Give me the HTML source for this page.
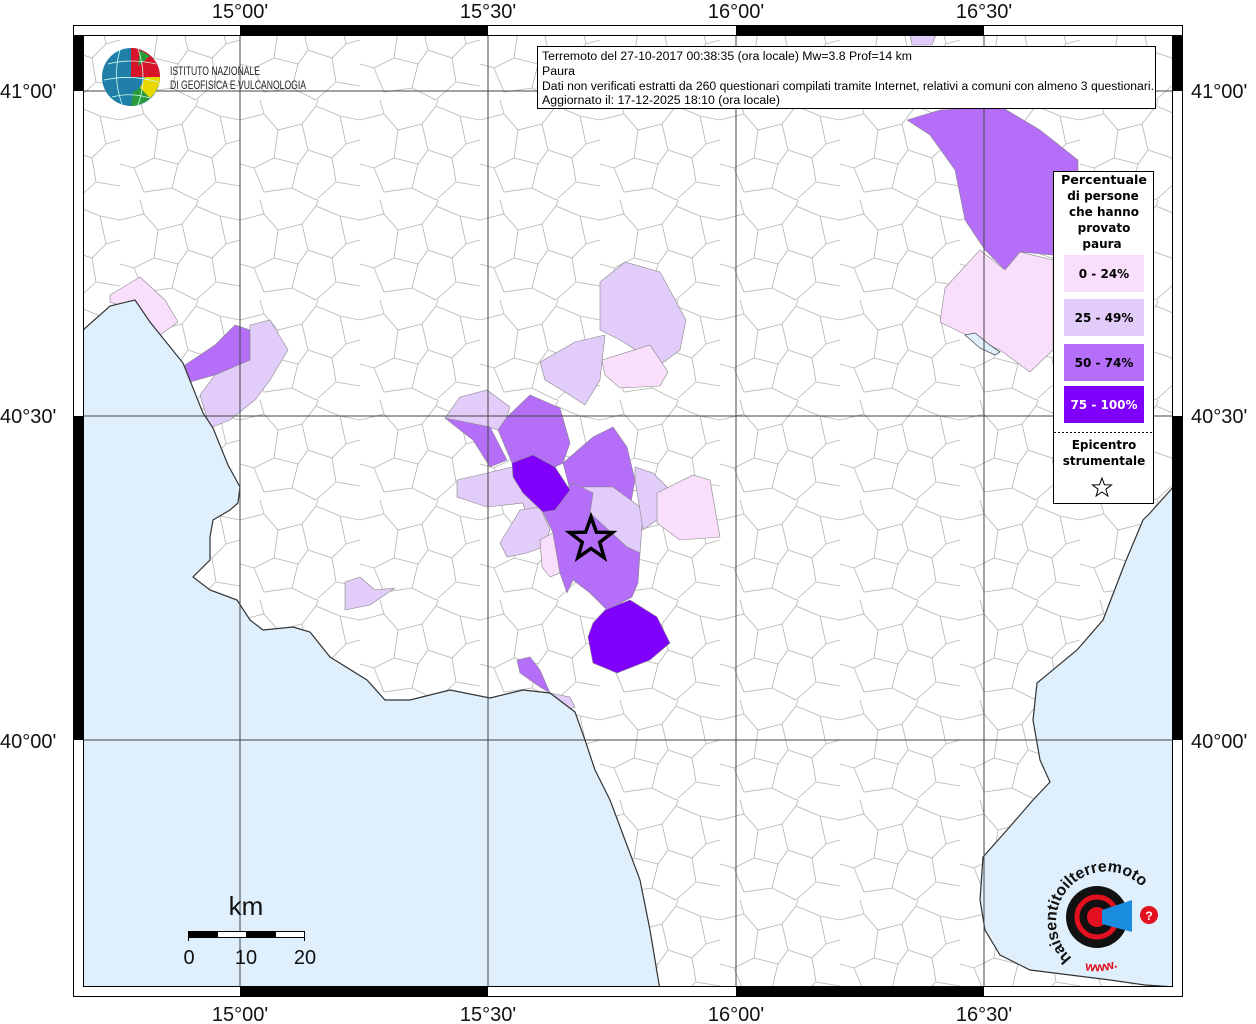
<!DOCTYPE html>
<html><head><meta charset="utf-8"><style>
html,body{margin:0;padding:0;background:#fff;}
svg{display:block;font-family:"Liberation Sans",sans-serif;}
</style></head><body>
<svg width="1256" height="1024" viewBox="0 0 1256 1024" xmlns="http://www.w3.org/2000/svg">
<defs>
<pattern id="bd" width="120" height="100" patternUnits="userSpaceOnUse">
<path d="M0 20 L24 14 L38 30 L62 24 L76 6 L100 16 L120 20 M38 30 L34 58 L14 68 L0 64 M34 58 L58 64 L68 50 L62 24 M68 50 L92 58 L106 44 L100 16 M92 58 L96 82 L120 86 M58 64 L52 88 L24 92 L14 68 M52 88 L76 100 M96 82 L76 100 M24 14 L20 0 M76 6 L78 0 M106 44 L120 40" fill="none" stroke="#b4b4b4" stroke-width="0.8"/>
</pattern>
<clipPath id="mc"><rect x="83" y="35" width="1090" height="952"/></clipPath>
</defs>
<rect x="83" y="35" width="1090" height="952" fill="#fff"/>
<g clip-path="url(#mc)">
<rect x="83" y="35" width="1090" height="952" fill="url(#bd)"/>
<g stroke="#888" stroke-width="0.6">
<path fill="#f9dffb" d="M110 295 L140 277 L165 300 L178 322 L160 335 L140 312 L110 302Z"/>
<path fill="#b56ef8" d="M185 365 L215 345 L235 325 L250 330 L250 360 L215 375 L190 382Z"/>
<path fill="#e2ccfa" d="M215 375 L250 360 L250 325 L270 320 L288 350 L270 380 L255 400 L230 420 L210 428 L200 395Z"/>
<path fill="#e2ccfa" d="M345 582 L360 577 L375 590 L395 588 L370 605 L345 610Z"/>
<path fill="#e2ccfa" d="M600 282 L625 262 L660 272 L686 320 L680 350 L660 365 L620 340 L600 330Z"/>
<path fill="#e2ccfa" d="M540 362 L575 342 L605 335 L600 380 L585 405 L565 392 L545 380Z"/>
<path fill="#f9dffb" d="M602 360 L650 345 L668 372 L660 386 L620 388 L605 375Z"/>
<path fill="#b56ef8" d="M907 120 L940 110 L1000 106 L1040 130 L1078 160 L1078 175 L1053 175 L1053 255 L1020 252 L1005 270 L985 250 L965 220 L955 170 L930 135Z"/>
<path fill="#f9dffb" d="M945 288 L980 250 L1005 270 L1020 252 L1053 260 L1053 350 L1030 372 L1000 350 L960 332 L940 322Z"/>
<path fill="#e2ccfa" d="M910 35 L936 35 L932 45 L912 45Z"/>
<path fill="#e2ccfa" d="M460 397 L487 390 L510 407 L507 417 L498 430 L488 427 L445 418Z"/>
<path fill="#b56ef8" d="M445 418 L490 427 L507 460 L490 467 L473 440 L460 430Z"/>
<path fill="#b56ef8" d="M507 417 L530 395 L560 408 L570 443 L563 463 L555 467 L533 455 L512 463 L498 430Z"/>
<path fill="#b56ef8" d="M563 463 L593 437 L613 427 L627 447 L635 480 L630 508 L613 487 L583 487 L570 490Z"/>
<path fill="#e2ccfa" d="M457 480 L487 473 L512 467 L523 493 L540 507 L527 520 L523 503 L487 507 L457 497Z"/>
<path fill="#e2ccfa" d="M500 543 L520 510 L540 507 L550 530 L543 547 L527 553 L507 557Z"/>
<path fill="#e2ccfa" d="M583 487 L613 487 L640 507 L643 513 L640 553 L627 547 L593 533 L590 513Z"/>
<path fill="#e2ccfa" d="M635 467 L653 473 L670 490 L657 520 L643 530 L640 510 L635 480Z"/>
<path fill="#f9dffb" d="M657 493 L693 475 L710 480 L720 537 L680 540 L657 523Z"/>
<path fill="#f9dffb" d="M540 540 L553 533 L560 573 L550 577 L542 567Z"/>
<path fill="#b56ef8" d="M543 512 L573 483 L593 493 L590 513 L627 547 L640 553 L638 583 L632 597 L607 610 L590 593 L573 580 L567 593 L560 573 L553 533Z"/>
<path fill="#7f00fb" d="M512 463 L533 455 L555 467 L570 490 L555 510 L543 512 L523 493 L513 477Z"/>
<path fill="#7f00fb" d="M593 623 L605 610 L630 600 L657 617 L670 643 L650 660 L617 673 L593 663 L588 637Z"/>
<path fill="#b56ef8" d="M517 660 L530 657 L540 670 L550 693 L540 687 L520 673Z"/>
<path fill="#e2ccfa" d="M550 693 L570 697 L575 707 L560 713Z"/>
</g>
<path fill="#dff0fc" stroke="#333" stroke-width="1.2" d="M83 330 L110 306 L135 300 L150 322 L183 363 L203 413 L213 428 L228 465 L240 487 L238 503 L230 510 L213 520 L210 537 L210 560 L193 577 L210 590 L237 600 L250 620 L263 630 L293 627 L310 632 L330 657 L367 680 L385 700 L410 700 L450 690 L490 698 L523 690 L550 693 L575 712 L585 740 L595 770 L610 800 L625 840 L640 880 L650 930 L660 990 L83 990Z"/>
<path fill="#dff0fc" stroke="#333" stroke-width="1.2" d="M1175 485 L1150 513 L1143 520 L1125 563 L1103 620 L1077 650 L1037 683 L1033 720 L1040 760 L1050 782 L1033 800 L1007 830 L983 857 L980 900 L985 930 L1000 955 L1030 970 L1070 975 L1110 980 L1145 985 L1175 987Z"/>
<path fill="#dff0fc" stroke="#555" stroke-width="0.8" d="M965 335 L975 333 L990 345 L1000 352 L995 355 L980 348Z"/>
</g>
<g stroke="#444" stroke-width="1">
<line x1="240" y1="35" x2="240" y2="987"/><line x1="488" y1="35" x2="488" y2="987"/>
<line x1="736" y1="35" x2="736" y2="987"/><line x1="984" y1="35" x2="984" y2="987"/>
<line x1="83" y1="91" x2="1173" y2="91"/><line x1="83" y1="416" x2="1173" y2="416"/>
<line x1="83" y1="740" x2="1173" y2="740"/>
</g>
<rect x="73.5" y="25.5" width="1109" height="971" fill="none" stroke="#000"/>
<rect x="83.5" y="35.5" width="1089" height="951" fill="none" stroke="#000"/>
<g fill="#000">
<rect x="240" y="26" width="248" height="9"/><rect x="736" y="26" width="248" height="9"/>
<rect x="240" y="987" width="248" height="9"/><rect x="736" y="987" width="248" height="9"/>
<rect x="74" y="35" width="9" height="56"/><rect x="74" y="416" width="9" height="324"/>
<rect x="1173" y="35" width="9" height="56"/><rect x="1173" y="416" width="9" height="324"/>
</g>
<g font-size="20" fill="#111" text-anchor="middle">
<text x="240" y="18">15°00'</text><text x="488" y="18">15°30'</text><text x="736" y="18">16°00'</text><text x="984" y="18">16°30'</text>
<text x="240" y="1021">15°00'</text><text x="488" y="1021">15°30'</text><text x="736" y="1021">16°00'</text><text x="984" y="1021">16°30'</text>
</g>
<g font-size="20" fill="#111">
<text x="0" y="98">41°00'</text><text x="0" y="423">40°30'</text><text x="0" y="748">40°00'</text>
<text x="1191" y="98">41°00'</text><text x="1191" y="423">40°30'</text><text x="1191" y="748">40°00'</text>
</g>
<rect x="537.5" y="46.5" width="618" height="62" fill="#fff" stroke="#000"/>
<g font-size="11.5" fill="#000">
<text x="542" y="60" textLength="370" lengthAdjust="spacingAndGlyphs">Terremoto del 27-10-2017 00:38:35 (ora locale) Mw=3.8 Prof=14 km</text>
<text x="542" y="75" textLength="33" lengthAdjust="spacingAndGlyphs">Paura</text>
<text x="542" y="90" textLength="612" lengthAdjust="spacingAndGlyphs">Dati non verificati estratti da 260 questionari compilati tramite Internet, relativi a comuni con almeno 3 questionari.</text>
<text x="542" y="104" textLength="238" lengthAdjust="spacingAndGlyphs">Aggiornato il: 17-12-2025 18:10 (ora locale)</text>
</g>
<circle cx="131" cy="77" r="29" fill="#1f7fa8"/>
<path d="M131 48 A29 29 0 0 1 160 77 L131 77Z" fill="#d8142a"/>
<path d="M140 50 L150 56 L138 66Z" fill="#2a9a3a"/>
<path d="M145 77 L160 77 A29 29 0 0 1 150 98 L140 88Z" fill="#e8d800"/>
<path d="M140 88 L150 98 A29 29 0 0 1 131 106 L133 92Z" fill="#2a9a3a"/>
<path d="M108 64 Q131 58 156 64 M104 80 Q131 74 158 82 M112 97 Q131 92 150 98 M120 50 Q112 77 122 104 M138 49 Q148 77 138 105" fill="none" stroke="#cfe" stroke-width="0.8"/>
<g font-size="12" fill="#222"><text x="170" y="75" textLength="90" lengthAdjust="spacingAndGlyphs">ISTITUTO NAZIONALE</text>
<text x="170" y="89" textLength="136" lengthAdjust="spacingAndGlyphs">DI GEOFISICA E VULCANOLOGIA</text></g>
<rect x="1053.5" y="171.5" width="100" height="332" fill="#fff" stroke="#000"/>
<g font-size="12" font-weight="bold" font-family="DejaVu Sans,sans-serif" text-anchor="middle" fill="#000">
<text x="1104" y="184" textLength="86" lengthAdjust="spacingAndGlyphs">Percentuale</text>
<text x="1103" y="200">di persone</text><text x="1104" y="216">che hanno</text>
<text x="1104" y="232">provato</text><text x="1102" y="248">paura</text>
</g>
<rect x="1064" y="255" width="80" height="37" fill="#f9dffb"/>
<rect x="1064" y="299" width="80" height="37" fill="#e2ccfa"/>
<rect x="1064" y="344" width="80" height="37" fill="#b56ef8"/>
<rect x="1064" y="386" width="80" height="37" fill="#7f00fb"/>
<g font-size="12" font-weight="bold" font-family="DejaVu Sans,sans-serif" text-anchor="middle">
<text x="1104" y="278" fill="#000">0 - 24%</text>
<text x="1104" y="322" fill="#000">25 - 49%</text>
<text x="1104" y="367" fill="#000">50 - 74%</text>
<text x="1104" y="409" fill="#fff">75 - 100%</text>
<text x="1104" y="449" fill="#000">Epicentro</text>
<text x="1104" y="465" fill="#000">strumentale</text>
</g>
<line x1="1054" y1="432.5" x2="1153" y2="432.5" stroke="#000" stroke-dasharray="2,2"/>
<path d="M1102 478 L1104.4 484.7 L1111.5 484.9 L1105.9 489.2 L1107.9 496 L1102 492 L1096.1 496 L1098.1 489.2 L1092.5 484.9 L1099.6 484.7Z" fill="#fff" stroke="#000"/>
<path d="M591 517 L596.4 532.2 L612.4 532.5 L599.7 542.3 L604.2 557.7 L591 548.5 L577.8 557.7 L582.3 542.3 L569.6 532.5 L585.6 532.2Z" fill="#b56ef8" stroke="#000" stroke-width="3.5"/>
<text x="246" y="915" font-size="26" text-anchor="middle" fill="#111">km</text>
<rect x="188.5" y="931.5" width="116" height="6" fill="#fff" stroke="#000"/>
<rect x="188" y="931" width="30" height="6" fill="#000"/><rect x="246" y="931" width="30" height="6" fill="#000"/>
<path d="M188.5 931 V941 M304.5 931 V941" stroke="#000"/>
<g font-size="20" fill="#111" text-anchor="middle"><text x="189" y="964">0</text><text x="246" y="964">10</text><text x="305" y="964">20</text></g>
<circle cx="1097" cy="917" r="31" fill="#111"/>
<circle cx="1097" cy="917" r="20" fill="none" stroke="#e3101f" stroke-width="5"/>
<circle cx="1097" cy="917" r="10" fill="#e3101f"/>
<path d="M1102 910 L1132 900 L1132 932 L1102 924Z" fill="#1a8de0"/>
<circle cx="1149" cy="915" r="9" fill="#e3101f"/>
<text x="1149" y="920" font-size="12" font-weight="bold" fill="#fff" text-anchor="middle">?</text>
<path id="arc" d="M1072 958 A41 41 0 1 1 1140 885" fill="none"/>
<text font-size="16" font-weight="bold" fill="#111"><textPath href="#arc">haisentitoilterremoto<tspan fill="#e3101f">.it</tspan></textPath></text>
<path id="arc2" d="M1085 970 A52 52 0 0 0 1142 945" fill="none"/>
<text font-size="13" font-weight="bold" fill="#e3101f"><textPath href="#arc2">www.</textPath></text>
</svg>
</body></html>
